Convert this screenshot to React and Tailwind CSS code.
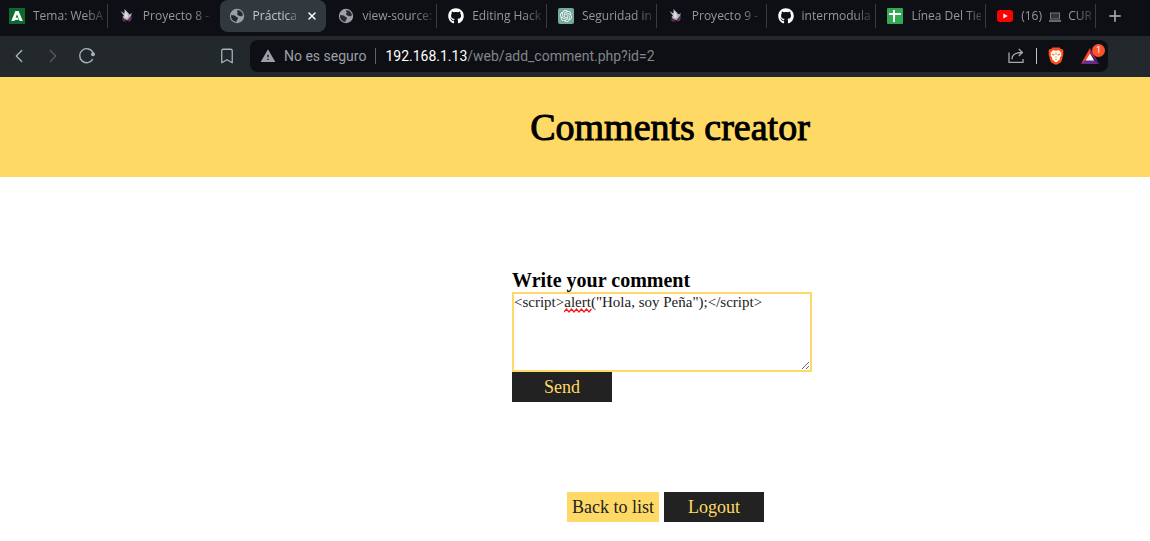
import { useState } from "react";
import { FaGithub } from "react-icons/fa";
import { MdWarning } from "react-icons/md";
import { SiOpenai } from "react-icons/si";
import { ChevronLeft, ChevronRight, Plus, X, Bookmark } from "lucide-react";

function JuntaIcon() {
  return (
    <svg viewBox="0 0 16 16" className="size-4">
      <rect width="16" height="16" fill="#0b6b2d" />
      <path d="M2.3 13 6.4 3h3.2L13.8 13h-3.2L8 6.2 6.7 9.8 8.6 9.5l1 2.2L5.8 12l-.4 1Z" fill="#fff" />
    </svg>
  );
}

function BirdIcon() {
  return (
    <svg viewBox="0 0 16 16" className="size-4">
      <path d="m9.5 6 3.500 1-.5 3.500-3.500 2.500-3-1L4 10l3-3Z" fill="#34386f" />
      <path d="m2.500 9.500 2 2 3.500 2-4 0Z" fill="#7d2b47" />
      <path d="m10 11 3-1.500-1.500 3.500-2.500.5Z" fill="#8e2d4c" />
      <path d="M1.500 3 5.500 5.500 5.500 1 9 4.500 10.500 6.500 13 5 11.500 8.500 8.500 12 5 11 3.500 8.500l1.500-.5Z" fill="#b3b5bf" />
      <path d="m6 3 2.500 3 .5 3L7 10.500 5.500 7.500Z" fill="#dedde3" />
    </svg>
  );
}

function GlobeIcon() {
  return (
    <svg viewBox="0 0 16 16" className="size-4">
      <circle cx="8" cy="8" r="7.200" fill="#9aa0a6" />
      <path
        d="M8.200 2.300c2.600-.2 4.700 1.400 5.500 3.700.3 1-.2 2-.9 2.300-.9.3-1.700-.5-2.600-.2-.5-1-1.700-.8-2-1.600-.3-.9.6-1.300.5-2.100C8.600 3.700 7.500 3.300 8.200 2.300ZM2.200 7c1 .2 2.200.3 3.300.5 1 .3 1.300 1.300 2.300 1.600 1.100.3 1.400 1 1 1.900-.4.8-1.300 1-1.300 2v.9C4.400 13.700 2 11.200 2 8Z"
        fill="#26292e"
      />
    </svg>
  );
}

function SheetIcon() {
  return (
    <svg viewBox="0 0 16 16" className="size-4">
      <rect width="16" height="16" rx="1" fill="#34a853" />
      <path d="M2 6h12M7 2v12" stroke="#fff" strokeWidth="2" />
    </svg>
  );
}

function ChatIcon() {
  return (
    <span className="flex size-4 items-center justify-center rounded-xs bg-[#74aa9c]">
      <SiOpenai className="size-3 text-white" />
    </span>
  );
}

function YoutubeIcon() {
  return (
    <svg viewBox="0 0 16 16" className="size-4">
      <rect y="2" width="16" height="12" rx="3" fill="#f00" />
      <path d="m6.300 5.500 4.400 2.500-4.400 2.500Z" fill="#fff" />
    </svg>
  );
}

function LaptopIcon() {
  return (
    <svg viewBox="0 0 12 10" className="mx-1 inline-block h-[10px] w-3">
      <rect x="1.500" y="1" width="9" height="6" fill="#333" stroke="#777" />
      <path d="M0 9h12" stroke="#888" strokeWidth="1.5" />
    </svg>
  );
}

function ReloadIcon() {
  return (
    <svg viewBox="0 0 18 18" className="size-[18px]" fill="none">
      <path d="M14.800 12.200A7 7 0 1 1 15.200 6" stroke="#a9b3b9" strokeWidth="1.4" />
      <circle cx="15" cy="7.300" r="2" fill="#a9b3b9" />
    </svg>
  );
}

function ShareIcon() {
  return (
    <svg viewBox="0 0 16 16" className="size-4" fill="none" stroke="#a5a8ad" strokeWidth="1.3">
      <path d="M1 4.500v9.800h14v-3.300" />
      <path d="M4 11.200C4 6.500 7 4.500 14 4.500M10.800 1l3.600 3.500L10.800 8" />
    </svg>
  );
}

function ShieldIcon() {
  return (
    <svg viewBox="0 0 16 18" className="h-[18px] w-4">
      <path d="M4.500.5h7l1.300 1.600 1.500-.2 1.300 2-.5 1.800.4 1.300-2 7.200c-.3 1-3.500 3-5.500 3.500-2-.5-5.200-2.500-5.500-3.500L.5 7l.4-1.300L.4 3.900l1.300-2 1.500.2Z" fill="#fb4f14" />
      <path d="M5 3.200 8 3.700l3-.5 2.500 2.700-.6 1.600.5 1-1.700 2.500.3 1.200-1.500 1.200L8 15.500l-2.500-2.100L4 12.200l.3-1.200-1.700-2.500.5-1-.6-1.600Z" fill="#fff" />
      <path d="m4 6.800 2.800.8-.9 1L4.300 8ZM12 6.800l-2.800.8.9 1 1.600-.6ZM7 9.800h2L8 11ZM6 12l2 1.200 2-1.200-2 .4ZM7.300 5.500h1.400L8 8.500Z" fill="#fb4f14" />
    </svg>
  );
}

function RewardsIcon() {
  return (
    <svg viewBox="0 0 18 16" className="h-4 w-[18px]">
      <path d="M9 0 0 16 9 10.500Z" fill="#ff4724" />
      <path d="M9 0v6l9 10Z" fill="#9e1f63" />
      <path d="M0 16h18L13.500 12h-9Z" fill="#662d91" />
      <path d="M9 5.500 4.800 12.500h8.400Z" fill="#fff" />
    </svg>
  );
}

const github = <FaGithub className="size-4 text-white" />;

const tabs = [
  { icon: <JuntaIcon />, title: "Tema: WebA", divider: true },
  { icon: <BirdIcon />, title: "Proyecto 8 -" },
  { icon: <GlobeIcon />, title: "Práctica", active: true },
  { icon: <GlobeIcon />, title: "view-source:", divider: true },
  { icon: github, title: "Editing Hack", divider: true },
  { icon: <ChatIcon />, title: "Seguridad in", divider: true },
  { icon: <BirdIcon />, title: "Proyecto 9 -", divider: true },
  { icon: github, title: "intermodula", divider: true },
  { icon: <SheetIcon />, title: "Línea Del Tie", divider: true },
  { icon: <YoutubeIcon />, title: <>(16) <LaptopIcon /> CUR</>, divider: true },
];

function Tab({ icon, title, active, divider }) {
  return (
    <div className="flex h-8 min-w-0 flex-1 items-center">
      <a
        href="#tab"
        className={
          active
            ? "flex h-8 min-w-0 flex-1 items-center rounded-lg bg-[#32393e] pr-2 pl-[9px] text-[#c5c8ca]"
            : "flex h-8 min-w-0 flex-1 items-center pr-1 pl-[9px] text-[#96979a]"
        }
      >
        <span className="flex size-4 shrink-0 items-center justify-center">{icon}</span>
        <span className="ml-2 min-w-0 flex-1 overflow-hidden text-xs whitespace-nowrap">
          <span className="inline-block mask-r-from-75% mask-r-to-110%">{title}</span>
        </span>
        {active && <X className="ml-2 size-3 shrink-0 text-white" strokeWidth={3} />}
      </a>
      <span className={divider ? "mr-[2px] h-6 w-px bg-[#3a3b3f]" : "mr-[2px] w-px"} />
    </div>
  );
}

export default function App() {
  const [comment, setComment] = useState('<script>alert("Hola, soy Peña");</script>');
  return (
    <div className="bg-white font-['Liberation_Serif',serif] text-black">
      <div className="font-['Open_Sans',sans-serif]">
        <nav aria-label="Tabs" className="flex h-9 items-start bg-[#0e0f14]">
          <div className="flex min-w-0 flex-1">
            {tabs.map((tab, i) => (
              <Tab key={i} {...tab} />
            ))}
          </div>
          <button aria-label="New tab" className="flex h-8 w-[52px] items-center pl-2 text-[#b5b6b8]">
            <Plus className="size-[18px]" />
          </button>
        </nav>
        <div className="flex h-[41px] items-center bg-[#22282b] pr-[42px] pb-px pl-2 text-[#a9b3b9]">
          <button aria-label="Back" className="flex w-[22px] justify-center">
            <ChevronLeft className="size-[22px]" strokeWidth={1.4} />
          </button>
          <button aria-label="Forward" className="ml-3 flex w-[22px] justify-center text-[#555c61]">
            <ChevronRight className="size-[22px]" strokeWidth={1.4} />
          </button>
          <button aria-label="Reload" className="ml-[14px]">
            <ReloadIcon />
          </button>
          <button aria-label="Bookmark" className="ml-[122px]">
            <Bookmark className="size-[18px]" strokeWidth={1.7} />
          </button>
          <div className="ml-[14px] flex h-8 min-w-0 flex-1 items-center rounded-lg bg-[#0e0f14] pr-2 pl-[10px] font-['Roboto',sans-serif] text-sm">
            <MdWarning className="size-4 text-[#9aa0a6]" />
            <span className="ml-2 text-[#9aa0a6]">No es seguro</span>
            <span className="mx-[9px] h-4 w-px bg-[#5f6368]" />
            <span className="flex-1 text-[#80868b]">
              <span className="text-white">192.168.1.13</span>/web/add_comment.php?id=2
            </span>
            <button aria-label="Share">
              <ShareIcon />
            </button>
            <span className="mr-[11px] ml-3 h-4 w-px bg-[#c0c1c3]" />
            <button aria-label="Shields">
              <ShieldIcon />
            </button>
            <button aria-label="Rewards" className="relative mr-px ml-[17px]">
              <RewardsIcon />
              <span className="absolute -top-1 left-[11px] flex size-[13px] items-center justify-center rounded-full bg-[#fb542b] text-[9px] text-white">
                1
              </span>
            </button>
          </div>
        </div>
      </div>
      <header className="flex h-[100px] items-center justify-center bg-[#ffd966] pl-[190px]">
        <h1 className="text-[38px] font-normal [-webkit-text-stroke:1px_black]">Comments creator</h1>
      </header>
      <main>
        <form className="flex justify-center pt-[90px] pl-[174px]" onSubmit={(e) => e.preventDefault()}>
          <div className="flex w-[300px] flex-col items-start">
            <label htmlFor="comment" className="h-[25px] text-xl leading-[26px] font-bold">
              Write your comment
            </label>
            <div className="relative flex w-full">
              <textarea
                id="comment"
                spellCheck={false}
                value={comment}
                onChange={(e) => setComment(e.target.value)}
                className="h-20 w-full border-2 border-[#ffd966] text-[15px] leading-[17px] text-[#222] outline-none"
              />
              <svg viewBox="0 0 30 5" className="pointer-events-none absolute top-4 left-[52px] h-[5px] w-[30px]" fill="none">
                <path d="m0 4 2.500-3 2.500 3 2.500-3 2.500 3 2.500-3 2.500 3 2.500-3 2.500 3 2.500-3 2.500 3 2.500-3" stroke="#f01c1c" strokeWidth="1.2" />
              </svg>
            </div>
            <button className="h-[30px] w-[100px] bg-[#222] text-lg leading-[30px] text-[#ffd966]">Send</button>
          </div>
        </form>
        <div className="flex justify-center gap-[5px] pt-[90px] pb-5 pl-[181px] text-lg leading-[30px]">
          <a href="#list" className="h-[30px] bg-[#ffd966] px-[5px] text-[#222]">
            Back to list
          </a>
          <a href="#logout" className="h-[30px] w-[100px] bg-[#222] text-center text-[#ffd966]">
            Logout
          </a>
        </div>
      </main>
    </div>
  );
}
